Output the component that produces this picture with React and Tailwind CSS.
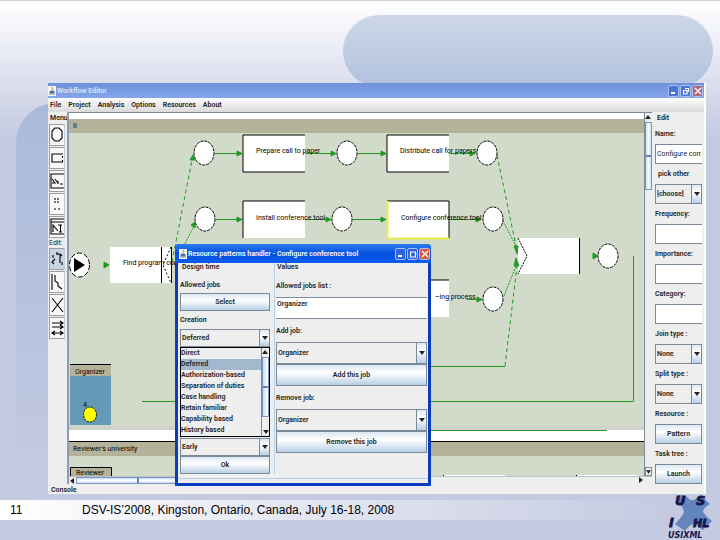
import React, { useState } from 'react';

const menus = ['File', 'Project', 'Analysis', 'Options', 'Resources', 'About'];

const creationPatterns = [
  'Direct',
  'Deferred',
  'Authorization-based',
  'Separation of duties',
  'Case handling',
  'Retain familiar',
  'Capability based',
  'History based',
];

const places = [
  [204, 153],
  [347, 153],
  [487, 153],
  [205, 219],
  [342, 219],
  [493, 219],
  [493, 299],
  [608, 256],
];

const arrows = [
  [215, 153, 243],
  [305, 153, 337],
  [358, 153, 387],
  [449, 153, 476],
  [216, 219, 243],
  [305, 219, 332],
  [353, 219, 387],
  [449, 219, 482],
  [467, 299, 483],
];

const steel = 'border border-[#7a8a99]';
const metal = 'bg-linear-to-b from-[#dde8f3] via-white via-40% to-[#b8cfe5]';

function DownArrow() {
  return (
    <svg viewBox="0 0 6 4" className="w-[6px] h-[4px]">
      <path d="M0 0H6L3 4Z" fill="#222" />
    </svg>
  );
}

function JavaIcon() {
  return (
    <svg viewBox="0 0 8 10" className="w-2 h-[10px] shrink-0">
      <rect width="8" height="10" fill="#f2f4f6" />
      <path d="M4 1Q5.500 2.500 4 4" stroke="#d0703a" fill="none" />
      <path d="M2 5H6V7H2ZM1 8H7" stroke="#56708c" fill="#56708c" strokeWidth="0.8" />
    </svg>
  );
}

function WindowButtons({ active }) {
  const blue = active ? 'bg-[#2f62dc]' : 'bg-[#4a72d8]';
  const red = active ? 'bg-[#d8573a]' : 'bg-[#b0637c]';
  const base = 'w-[11px] h-3 rounded-xs border border-[#a9c0f0] flex items-center justify-center';
  return (
    <div className="flex gap-px ml-auto shrink-0">
      <button aria-label="Minimize" className={`${base} ${blue}`}>
        <svg viewBox="0 0 8 8" className="w-2 h-2"><path d="M1 6H5" stroke="#fff" strokeWidth="2" /></svg>
      </button>
      <button aria-label="Maximize" className={`${base} ${blue}`}>
        <svg viewBox="0 0 8 8" className="w-2 h-2">
          {active ? (
            <path d="M1 2H7M1.500 2V7H6.500V2" stroke="#fff" fill="none" strokeWidth="1.2" />
          ) : (
            <path d="M3 1.500H6.500V5M1.500 3.500H5V7H1.500Z" stroke="#fff" fill="none" strokeWidth="1.2" />
          )}
        </svg>
      </button>
      <button aria-label="Close" className={`${base} ${red}`}>
        <svg viewBox="0 0 8 8" className="w-2 h-2"><path d="M1 1L7 7M7 1L1 7" stroke="#fff" strokeWidth="1.4" /></svg>
      </button>
    </div>
  );
}

function Combo({ id, label, options, className = 'h-5' }) {
  return (
    <div className={`relative flex ${steel} ${className}`}>
      <select id={id} aria-label={label} className="appearance-none w-full h-full pl-px pr-3 bg-[#eee] font-semibold outline-none">
        {options.map((option) => (
          <option key={option}>{option}</option>
        ))}
      </select>
      <span className={`absolute right-0 inset-y-0 w-[10px] border-l border-[#7a8a99] flex items-center justify-center pointer-events-none ${metal}`}>
        <DownArrow />
      </span>
    </div>
  );
}

function MetalButton({ children, className = 'h-5' }) {
  return <button className={`block w-full font-semibold ${steel} ${metal} ${className}`}>{children}</button>;
}

function Field({ id, label, children }) {
  return (
    <div>
      <label htmlFor={id} className="flex items-center h-5">{label}</label>
      {children}
    </div>
  );
}

const textBox = 'block w-full h-5 bg-white border border-r-0 border-[#7a8a99] px-px outline-none';

function EditPanel() {
  const [name, setName] = useState('Configure conference tool');
  return (
    <aside className="w-[52px] shrink-0 bg-[#eee] pl-[3px] pr-[2px]">
      <h2 className="h-3 leading-3 pl-[2px]">Edit</h2>
      <Field id="name" label="Name:">
        <input id="name" className={`${textBox} font-normal`} value={name} onChange={(e) => setName(e.target.value)} />
      </Field>
      <Field id="other" label={<span className="pl-[3px]">pick other</span>}>
        <Combo id="other" options={['[choose]']} />
      </Field>
      <Field id="frequency" label="Frequency:"><input id="frequency" className={textBox} /></Field>
      <Field id="importance" label="Importance:"><input id="importance" className={textBox} /></Field>
      <Field id="category" label="Category:"><input id="category" className={textBox} /></Field>
      <Field id="join" label="Join type :"><Combo id="join" options={['None']} /></Field>
      <Field id="split" label="Split type :"><Combo id="split" options={['None']} /></Field>
      <p className="flex items-center h-5">Resource :</p>
      <MetalButton>Pattern</MetalButton>
      <p className="flex items-center h-5">Task tree :</p>
      <MetalButton>Launch</MetalButton>
    </aside>
  );
}

const tools = [
  { name: 'Place', path: 'M5 3H9L12 6V13L9 16H5L2 13V6Z' },
  { name: 'Task', path: 'M13 6H2V14H13M12.500 8V10M12.500 12V14' },
  { name: 'Split task', path: 'M14 3H1V17H14M2 8L5 12L2 12M5 8L8 12M8 10V13M10 13H13' },
  { name: 'Group', path: 'M5 4V6M8 4V6M5 7V9M8 7V9M4 15H6M8 15H10' },
  { name: 'Resource', path: 'M14 2H1V17H14M1 5H14M3 15V8L8 14M8 8H12M10.500 8V15M9 15H12' },
];

const editTools = [
  { name: 'Move', path: 'M3 6V9M5 10L2 13L4 15M7 5H10V14M10 5L12 7M12 13V16M7 3V6', on: true },
  { name: 'Line', path: 'M2 2V18M5 3V9L8 11V14L12 17' },
  { name: 'Delete', path: 'M2 3L13 17M13 3L2 17' },
  { name: 'Order', path: 'M2 5H13M10 3L13 5L10 7M2 9H13M10 7L13 9L10 11M2 15H13M5 13L2 15L5 17M10 13L13 15L10 17' },
];

function ToolButton({ tool }) {
  return (
    <button
      aria-label={tool.name}
      className={`block w-4 h-[22px] border border-[#9c9ca4] border-r-[#c4ccd8] ${tool.on ? 'bg-[#c6d4e4]' : 'bg-[#f8f8f8]'}`}
    >
      <svg viewBox="0 0 14 20" className="w-[14px] h-5">
        <path d={tool.path} fill="none" stroke="#000" strokeWidth="1.1" />
      </svg>
    </button>
  );
}

function ToolBar() {
  return (
    <aside className="w-[19px] shrink-0 bg-[#eee] pl-px">
      <h2 className="h-3 leading-3 pl-px">Menu</h2>
      <div className="flex flex-col gap-px">
        {tools.map((tool) => <ToolButton key={tool.name} tool={tool} />)}
      </div>
      <h2 className="h-[10px] leading-[10px] font-normal">Edit:</h2>
      <div className="flex flex-col gap-px">
        {editTools.map((tool) => <ToolButton key={tool.name} tool={tool} />)}
      </div>
    </aside>
  );
}

function TaskBox({ x, y, edge = 'M62 0H0V37H62' }) {
  return (
    <g transform={`translate(${x} ${y})`}>
      <rect width="62" height="37" fill="#fff" />
      <path d={edge} fill="none" stroke="#000" />
    </g>
  );
}

// Petri net drawn over the swimlanes
function Net() {
  return (
    <svg viewBox="69 113 575 364" className="absolute left-0 top-0 w-[575px] h-[364px] text-[7px]">
      <g fill="none" stroke="#229a22">
        <path d="M142 401.500H633.500V256M431 430.500H607M431 366.500H505" />
        <path d="M172 262L192 160M497 155L516 246M505 366L517 266" strokeDasharray="4 3" />
        <path d="M174 265L195 224M503 221L516 246M504 296L516 266" strokeDasharray="2 1" />
      </g>

      <TaskBox x={243} y={135} />
      <TaskBox x={387} y={135} />
      <TaskBox x={243} y={201} edge="M62 0H0V37" />
      <TaskBox x={387} y={201} edge="M0 0H62V37" />
      <path d="M387.500 201V238.500H449" fill="none" stroke="#ecec50" strokeWidth="2" />
      <TaskBox x={387} y={280} edge="M0 0H62" />

      <rect x="110" y="247" width="62" height="36" fill="#fff" />
      <path d="M161.500 247V283M171.500 247V283" stroke="#000" />
      <path d="M171 247L163 265L171 283" fill="none" stroke="#000" strokeDasharray="2 2" />
      <rect x="518" y="238" width="61" height="36" fill="#fff" />
      <path d="M579.500 238V274" stroke="#000" />
      <path d="M518 238L527 256L518 274" fill="none" stroke="#000" strokeDasharray="2 1" />

      <g fill="#fff" stroke="#000" strokeDasharray="3 1">
        <ellipse cx="79.500" cy="265" rx="10" ry="12" strokeDasharray="5 2" />
        {places.map(([x, y]) => (
          <ellipse key={`${x}-${y}`} cx={x} cy={y} rx="10" ry="12" />
        ))}
      </g>
      <path d="M74 258V272L85 265Z" />

      <g fill="#229a22" stroke="#229a22">
        {arrows.map(([x1, y, x2]) => (
          <path key={`${x1}-${y}`} d={`M${x1} ${y + 0.5}H${x2 - 6}V${y - 2}L${x2 - 1} ${y + 0.5}L${x2 - 6} ${y + 3}V${y + 0.5}`} />
        ))}
        <path d="M104 262V268L109 265Z M593 253V259L598 256Z" />
        <path d="M193 155L190 160H195Z M195 222L191 225L195 228Z M514 246H518L517 254Z M514 266H519L516 258Z" />
      </g>

      <g>
        <text x="256" y="153">Prepare call to paper</text>
        <text x="400" y="153">Distribute call for papers</text>
        <text x="256" y="220">Install conference tool</text>
        <text x="401" y="220">Configure conference tool</text>
        <text x="435" y="299">–ing process</text>
        <text x="123" y="265">Find program con</text>
      </g>

      <rect x="70" y="364" width="41" height="61" fill="#6699b5" />
      <path d="M70 364H111V376H70Z" fill="#b5b29a" />
      <path d="M70 364.500H111" stroke="#000" />
      <text x="75" y="374">Organizer</text>
      <text x="83" y="407">4</text>
      <ellipse cx="90" cy="414.500" rx="6.500" ry="7.500" fill="#ff0" stroke="#000" strokeDasharray="2 1" />

      <path d="M70.500 477V467.500H111.500V477" fill="#b5b29a" stroke="#000" />
      <text x="76" y="475">Reviewer</text>
      <path d="M443 475H505V477H443ZM576 475H638V477H576Z" fill="#fff" />
      <path d="M443.500 475V477M576.500 475V477" stroke="#000" />
    </svg>
  );
}

function VerticalScroll() {
  return (
    <div className="w-2 shrink-0 flex flex-col bg-[#eee] border-l border-[#7a8a99]">
      <button aria-label="Scroll up" className="h-[9px] flex items-center justify-center rotate-180"><DownArrow /></button>
      <div className="h-[68px] bg-linear-to-r from-[#c8dcf0] via-white to-[#c8dcf0] border border-[#7b94bd] flex items-center">
        <span className="w-full h-[2px] bg-[#6382bf]" />
      </div>
      <button aria-label="Scroll down" className="h-[9px] mt-auto border border-[#7a8a99] flex items-center justify-center"><DownArrow /></button>
    </div>
  );
}

function HorizontalScroll() {
  return (
    <div className="h-2 flex bg-[#eee] border-t border-[#b8c4d0]">
      <button aria-label="Scroll left" className="w-[7px] flex items-center justify-center rotate-90"><DownArrow /></button>
      <div className="w-[124px] bg-linear-to-b from-[#c8dcf0] via-white to-[#c8dcf0] border border-[#7b94bd] flex justify-center">
        <span className="w-[2px] bg-[#6382bf]" />
      </div>
      <button aria-label="Scroll right" className="w-[7px] ml-auto mr-2 flex items-center justify-center -rotate-90"><DownArrow /></button>
    </div>
  );
}

function PatternsDialog() {
  const [selected, setSelected] = useState('Deferred');
  return (
    <section
      role="dialog"
      aria-label="Resource patterns handler"
      className="absolute left-[106px] top-[132px] w-[256px] flex flex-col bg-[#0a3cc0] rounded-t-sm px-[3px] pb-[3px]"
    >
      <header className="-mx-[3px] h-[19px] pl-1 pr-px flex items-center gap-px rounded-t-sm bg-linear-to-b from-[#2a7cf4] via-[#0650dc] to-[#0a5cf0] text-white whitespace-nowrap">
        <JavaIcon />
        <h1>Resource patterns handler - Configure conference tool</h1>
        <WindowButtons active />
      </header>
      <div className="bg-[#eee] pb-1">
        <div className="flex border-b border-[#b8cfe5] pb-1">
          <div className="w-[97px] pl-[2px] pr-1 border-r border-[#b8cfe5]">
            <h2 className="h-2 leading-2 pl-[2px]">Design time</h2>
            <p className="h-[22px] pt-[10px]">Allowed jobs</p>
            <MetalButton className="h-[18px]">Select</MetalButton>
            <label htmlFor="creation" className="flex items-center h-[18px]">Creation</label>
            <Combo id="creation" options={['Deferred']} className="h-[18px]" />
            <div className="flex border border-black bg-[#eee]">
              <ul role="listbox" aria-label="Creation patterns" className="flex-1">
                {creationPatterns.map((pattern) => (
                  <li
                    key={pattern}
                    role="option"
                    aria-selected={pattern === selected}
                    onClick={() => setSelected(pattern)}
                    className={`h-[11px] leading-[11px] whitespace-nowrap ${pattern === selected ? 'bg-[#a3b8cc]' : ''}`}
                  >
                    {pattern}
                  </li>
                ))}
              </ul>
              <div className="w-2 flex flex-col border-l border-[#7a8a99]">
                <span className="h-[9px] flex items-center justify-center rotate-180"><DownArrow /></span>
                <span className="h-[60px] flex items-center bg-linear-to-r from-[#c8dcf0] to-white border border-[#7b94bd]">
                  <span className="w-full h-[2px] bg-[#6382bf]" />
                </span>
                <span className="h-[9px] mt-auto flex items-center justify-center"><DownArrow /></span>
              </div>
            </div>
            <Combo label="Completion" options={['Early']} className="h-[18px] mt-px" />
            <MetalButton className="h-[18px]">Ok</MetalButton>
          </div>
          <div className="flex-1 pl-px pr-px">
            <h2 className="h-2 leading-2 pl-px">Values</h2>
            <label htmlFor="jobs" className="flex items-center h-[26px] pt-1">Allowed jobs list :</label>
            <textarea
              id="jobs"
              defaultValue="Organizer"
              className="block w-full h-[22px] resize-none overflow-hidden bg-white border-y border-[#7a8a99] px-px pt-[2px] leading-2 font-semibold outline-none"
            />
            <label htmlFor="add-job" className="flex items-center h-[23px]">Add job:</label>
            <Combo id="add-job" options={['Organizer']} className="h-[22px]" />
            <MetalButton className="h-[22px]">Add this job</MetalButton>
            <label htmlFor="remove-job" className="flex items-center h-[23px]">Remove job:</label>
            <Combo id="remove-job" options={['Organizer']} className="h-[22px]" />
            <MetalButton className="h-[22px]">Remove this job</MetalButton>
          </div>
        </div>
      </div>
    </section>
  );
}

function Canvas() {
  return (
    <main className="relative flex-1 min-w-0 flex flex-col border-l-2 border-[#8c9cb8]">
      <div className="flex-1 flex border-t border-[#7a8a99]">
        <div className="relative flex-1 min-w-0 overflow-hidden flex flex-col bg-white font-normal text-black">
          <div className="mt-[6px] h-[14px] leading-[14px] pl-1 bg-[#b5b29a]">II</div>
          <div className="h-[297px] bg-[#d2dbc9] border-b-4 border-[#cfd3ca]" />
          <div className="mt-[11px] h-[15px] leading-[14px] pl-1 border-t border-black bg-[#b5b29a]">Reviewer's university</div>
          <div className="flex-1 bg-[#d2dbc9]" />
          <Net />
        </div>
        <VerticalScroll />
      </div>
      <HorizontalScroll />
      <PatternsDialog />
    </main>
  );
}

function Logo() {
  return (
    <svg viewBox="0 4 52 48" className="w-[52px] h-12 shrink-0" role="img" aria-label="UsiXML">
      <path d="M10 7Q19 7 22 12Q28 13 32 7L42 16Q35 20 35 24Q38 29 44 33L35 42Q30 38 25 36Q20 38 17 43L7 36Q14 29 16 24Q15 18 9 14Z" fill="#6484bd" />
      <g fill="#16164a" stroke="#16164a" strokeWidth="0.8" fontFamily="DejaVu Sans" fontWeight="bold" fontStyle="italic">
        <text x="7" y="17" fontSize="13">U</text>
        <text x="28" y="17" fontSize="13">S</text>
        <text x="1" y="39" fontSize="13">I</text>
        <text x="25" y="39" fontSize="11">HL</text>
      </g>
      <text x="0" y="50" fontSize="8" fill="#16164a" fontFamily="DejaVu Sans" fontWeight="bold" fontStyle="italic">USIXML</text>
    </svg>
  );
}

function App() {
  return (
    <div className="relative min-h-screen flex flex-col overflow-hidden border-t border-[#d0d0d0] bg-linear-to-b from-white via-[#c4cae1] via-25% to-[#c4cae1] font-[Roboto,'Liberation_Sans',sans-serif] text-[7px] leading-2 font-semibold text-[#222]">
      <div className="absolute left-[343px] right-[7px] top-[14px] h-[72px] rounded-full bg-linear-to-b from-[#cdd7e8] to-[#b1c1dd]" />
      <div className="absolute left-4 w-32 top-[102px] h-[378px] rounded-tl-[40px] bg-linear-to-b from-[#a8badb] to-[#c4cae1]" />

      <div className="relative z-10 mt-[82px] ml-12 mr-[14px] flex flex-col bg-[#eee] border-r-2 border-white">
        <header className="h-[15px] flex items-center gap-px pr-px bg-linear-to-b from-[#7090dc] to-[#84a6ea] text-[#dbe6fa]">
          <JavaIcon />
          <h1>Workflow Editor</h1>
          <WindowButtons />
        </header>
        <nav className="h-[14px] flex items-center gap-[7px] pl-[2px] bg-linear-to-b from-white to-[#dadada]">
          {menus.map((menu) => (
            <button key={menu}>{menu}</button>
          ))}
        </nav>
        <div className="flex">
          <ToolBar />
          <Canvas />
          <EditPanel />
        </div>
        <footer className="h-[10px] pl-[3px] pt-[2px] overflow-hidden">Console</footer>
      </div>

      <div className="relative mt-auto flex items-end h-[46px]">
        <footer className="mb-5 h-5 flex-1 min-w-0 flex items-center pl-[10px] bg-linear-to-r from-white to-[#c4cae1] font-['Liberation_Sans',Arial,sans-serif] text-xs font-normal text-black">
          <span className="w-[72px]">11</span>
          <span>DSV-IS’2008, Kingston, Ontario, Canada, July 16-18, 2008</span>
        </footer>
        <Logo />
      </div>
    </div>
  );
}

export default App;
